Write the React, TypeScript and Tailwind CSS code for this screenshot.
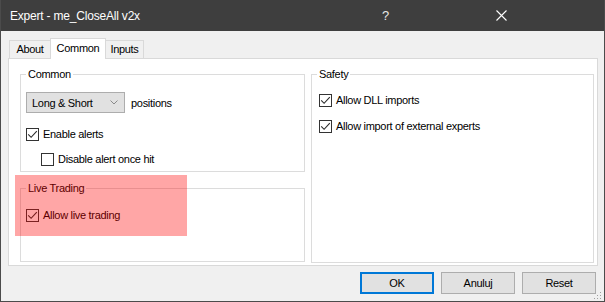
import React from "react";

interface CheckProps {
  checked?: boolean;
}

const Check = ({ checked }: CheckProps) => (
  <span className="flex h-[13px] w-[13px] shrink-0 items-center justify-center border border-[#333333] bg-white">
    {checked && (
      <svg width="11" height="11" viewBox="0 0 11 11">
        <path d="M1.2 5.3 L4.1 8.3 L9.8 2.2" fill="none" stroke="#2b2b2b" strokeWidth="1.1" />
      </svg>
    )}
  </span>
);

const CheckRow = ({ label, checked, className }: { label: string; checked?: boolean; className?: string }) => (
  <div className={"flex items-center gap-[4px] " + (className ?? "")}>
    <Check checked={checked} />
    <span className="leading-[14px]">{label}</span>
  </div>
);

const Group = ({ title, className, children }: { title: string; className?: string; children?: React.ReactNode }) => (
  <fieldset className={"border border-[#dcdcdc] " + (className ?? "")}>
    <legend className="ml-[5px] px-[2px] leading-[14px]">{title}</legend>
    {children}
  </fieldset>
);

const Button = ({ label, primary }: { label: string; primary?: boolean }) => (
  <button
    className={
      "h-[22px] w-[74px] bg-[#e1e1e1] leading-[14px] " +
      (primary ? "border-2 border-[#0078d7]" : "border border-[#adadad]")
    }
  >
    {label}
  </button>
);

export default function App() {
  return (
    <div className="flex h-[302px] w-[605px] flex-col border-x border-b border-[#4b4b4b] bg-[#f0f0f0] font-['Liberation_Sans',Arial,sans-serif] text-[11px] tracking-[-0.3px] text-black">
      {/* title bar */}
      <div className="flex h-[31px] shrink-0 items-center bg-[#3e3e3e] text-white">
        <span className="ml-[9px] text-[12px] tracking-[-0.2px]">Expert - me_CloseAll v2x</span>
        <span className="ml-auto mr-[107px] text-[13px] text-[#e8e8e8]">?</span>
        <svg width="11" height="11" viewBox="0 0 11 11" className="mr-[97px]">
          <path d="M0.5 0.5 L10.5 10.5 M10.5 0.5 L0.5 10.5" stroke="#ffffff" strokeWidth="1.1" />
        </svg>
      </div>

      <div className="relative flex flex-col pl-[7px] pr-[6px] pt-[7px]">
        {/* tabs */}
        <div className="flex h-[20px] items-end pl-[1px]">
          <div className="flex h-[18px] w-[41px] items-center justify-center border-l border-t border-[#d9d9d9] bg-[#f0f0f0]">
            About
          </div>
          <div className="relative z-10 -mb-px flex h-[21px] w-[56px] items-center justify-center border-x border-t border-[#d9d9d9] bg-white pb-[2px]">
            Common
          </div>
          <div className="flex h-[18px] w-[38px] items-center justify-center border-r border-t border-[#d9d9d9] bg-[#f0f0f0]">
            Inputs
          </div>
        </div>

        {/* panel */}
        <div className="flex h-[208px] gap-[6px] border border-[#d9d9d9] bg-white pl-[11px] pt-[8px]">
          <div className="flex w-[285px] flex-col gap-[9px]">
            <Group title="Common" className="h-[105px]">
              <div className="flex flex-col pl-[5px] pt-[11px]">
                <div className="flex items-center gap-[6px]">
                  <div className="flex h-[21px] w-[99px] items-center justify-between border border-[#adadad] bg-[#e1e1e1] pl-[5px] pr-[6px]">
                    <span className="leading-[14px]">Long &amp; Short</span>
                    <svg width="8" height="5" viewBox="0 0 8 5">
                      <path d="M0.5 0.5 L4 4 L7.5 0.5" fill="none" stroke="#8a8a8a" strokeWidth="1" />
                    </svg>
                  </div>
                  <span className="leading-[14px]">positions</span>
                </div>
                <CheckRow label="Enable alerts" checked className="mt-[14px]" />
                <CheckRow label="Disable alert once hit" className="ml-[15px] mt-[11px]" />
              </div>
            </Group>
            <Group title="Live Trading" className="h-[81px]">
              <CheckRow label="Allow live trading" checked className="ml-[5px] mt-[13px]" />
            </Group>
          </div>
          <Group title="Safety" className="h-[196px] w-[283px]">
            <div className="flex flex-col pl-[7px] pt-[12px]">
              <CheckRow label="Allow DLL imports" checked />
              <CheckRow label="Allow import of external experts" checked className="mt-[12px]" />
            </div>
          </Group>
        </div>

        {/* buttons */}
        <div className="mt-[6px] flex justify-end gap-[7px] pr-[2px]">
          <Button label="OK" primary />
          <Button label="Anuluj" />
          <Button label="Reset" />
        </div>

        {/* highlight overlay */}
        <div className="pointer-events-none absolute left-[14px] top-[144px] h-[61px] w-[172px] bg-[rgba(255,0,0,0.35)]" />

        {/* resize grip */}
        <svg width="8" height="8" viewBox="0 0 8 8" className="absolute bottom-[-6px] right-[2px]">
          <rect x="6" y="0" width="1" height="1" fill="#a0a0a0" />
          <rect x="3" y="3" width="1" height="1" fill="#a0a0a0" />
          <rect x="6" y="3" width="1" height="1" fill="#a0a0a0" />
          <rect x="0" y="6" width="1" height="1" fill="#a0a0a0" />
          <rect x="3" y="6" width="1" height="1" fill="#a0a0a0" />
          <rect x="6" y="6" width="1" height="1" fill="#a0a0a0" />
        </svg>
      </div>
    </div>
  );
}
